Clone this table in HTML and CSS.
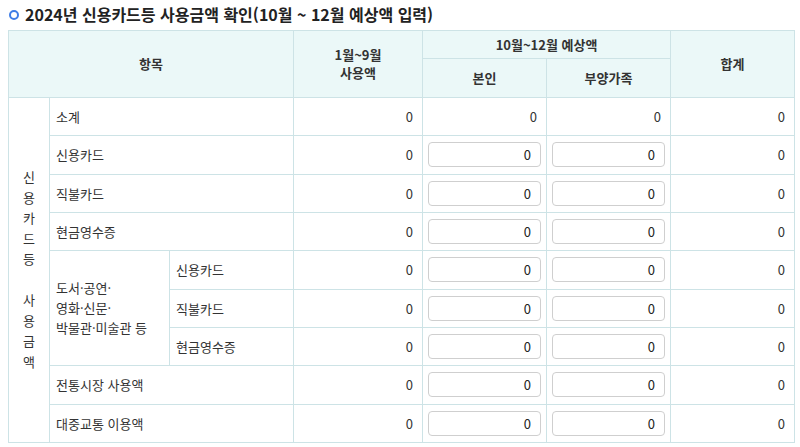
FILE: index.html
```html
<!DOCTYPE html>
<html lang="ko">
<head>
<meta charset="utf-8">
<link rel="stylesheet" href="styles.css">
</head>
<body>
<h2 class="title"><span class="dot"></span>2024년 신용카드등 사용금액 확인(10월 ~ 12월 예상액 입력)</h2>
<table class="grid">
  <colgroup>
    <col class="c1"><col class="c2"><col class="c3"><col class="c4"><col class="c5"><col class="c6"><col class="c7">
  </colgroup>
  <thead>
    <tr class="h1">
      <th colspan="3" rowspan="2">항목</th>
      <th rowspan="2" class="two"><div>1월~9월</div><div>사용액</div></th>
      <th colspan="2">10월~12월 예상액</th>
      <th rowspan="2">합계</th>
    </tr>
    <tr class="h2">
      <th>본인</th>
      <th>부양가족</th>
    </tr>
  </thead>
  <tbody>
    <tr>
      <td rowspan="9" class="vert">신<br>용<br>카<br>드<br>등<br><br>사<br>용<br>금<br>액</td>
      <td colspan="2" class="lbl">소계</td>
      <td class="num">0</td>
      <td class="num">0</td>
      <td class="num">0</td>
      <td class="num">0</td>
    </tr>
    <tr>
      <td colspan="2" class="lbl">신용카드</td>
      <td class="num">0</td>
      <td class="inp"><input class="box" type="text" value="0"></td>
      <td class="inp"><input class="box" type="text" value="0"></td>
      <td class="num">0</td>
    </tr>
    <tr>
      <td colspan="2" class="lbl">직불카드</td>
      <td class="num">0</td>
      <td class="inp"><input class="box" type="text" value="0"></td>
      <td class="inp"><input class="box" type="text" value="0"></td>
      <td class="num">0</td>
    </tr>
    <tr>
      <td colspan="2" class="lbl">현금영수증</td>
      <td class="num">0</td>
      <td class="inp"><input class="box" type="text" value="0"></td>
      <td class="inp"><input class="box" type="text" value="0"></td>
      <td class="num">0</td>
    </tr>
    <tr>
      <td rowspan="3" class="lbl multi">도서·공연·<br>영화·신문·<br>박물관·미술관 등</td>
      <td class="lbl">신용카드</td>
      <td class="num">0</td>
      <td class="inp"><input class="box" type="text" value="0"></td>
      <td class="inp"><input class="box" type="text" value="0"></td>
      <td class="num">0</td>
    </tr>
    <tr>
      <td class="lbl">직불카드</td>
      <td class="num">0</td>
      <td class="inp"><input class="box" type="text" value="0"></td>
      <td class="inp"><input class="box" type="text" value="0"></td>
      <td class="num">0</td>
    </tr>
    <tr>
      <td class="lbl">현금영수증</td>
      <td class="num">0</td>
      <td class="inp"><input class="box" type="text" value="0"></td>
      <td class="inp"><input class="box" type="text" value="0"></td>
      <td class="num">0</td>
    </tr>
    <tr>
      <td colspan="2" class="lbl">전통시장 사용액</td>
      <td class="num">0</td>
      <td class="inp"><input class="box" type="text" value="0"></td>
      <td class="inp"><input class="box" type="text" value="0"></td>
      <td class="num">0</td>
    </tr>
    <tr>
      <td colspan="2" class="lbl">대중교통 이용액</td>
      <td class="num">0</td>
      <td class="inp"><input class="box" type="text" value="0"></td>
      <td class="inp"><input class="box" type="text" value="0"></td>
      <td class="num">0</td>
    </tr>
  </tbody>
</table>
</body>
</html>
```
FILE: styles.css
```css
html, body {
  margin: 0;
  padding: 0;
  background: #fff;
}
body {
  padding: 4px 6px 0 8px;
  font-family: "Noto Sans CJK KR", "Noto Sans", sans-serif;
  color: #333;
  font-size: 13px;
}
.title {
  margin: 0 0 5px 0;
  font-size: 16px;
  font-weight: 700;
  color: #222;
  line-height: 21px;
  display: flex;
  align-items: center;
  gap: 6px;
}
.dot {
  width: 6px;
  height: 6px;
  border: 2px solid #3f7de6;
  border-radius: 50%;
  display: inline-block;
  margin-left: 1px;
}
.grid {
  border-collapse: collapse;
  width: 786px;
  table-layout: fixed;
}
.c1 { width: 41px; }
.c2 { width: 120px; }
.c3 { width: 124px; }
.c4 { width: 129px; }
.c5 { width: 124px; }
.c6 { width: 124px; }
.c7 { width: 124px; }
.grid th, .grid td {
  border: 1px solid #cde3e6;
  padding: 0;
}
.grid th {
  background: #ebf8f8;
  font-weight: 700;
  font-size: 13px;
  color: #333;
  line-height: 16px;
  text-align: center;
}
.grid th.two {
  line-height: 18px;
}
.h1 { height: 28px; }
.h2 { height: 39px; }
.grid tbody tr { height: 38.33px; }
.vert {
  text-align: center;
  line-height: 20.5px;
  font-size: 13px;
}
.lbl {
  padding-left: 6px !important;
  text-align: left;
}
.multi {
  line-height: 20px;
}
.num {
  text-align: right;
  padding-right: 9px !important;
}
.inp {
  padding: 0 5px !important;
}
.box {
  display: block;
  box-sizing: border-box;
  width: 113px;
  height: 25px;
  border: 1px solid #cfcfcf;
  border-radius: 4px;
  text-align: right;
  padding: 0 9px;
  font-family: "Noto Sans CJK KR", "Noto Sans", sans-serif;
  font-size: 13px;
  color: #222;
  background: #fff;
}
```
